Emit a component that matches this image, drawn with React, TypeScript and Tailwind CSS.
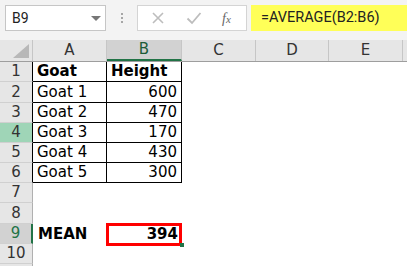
const cols = [
  { key: 'A', w: 'w-[74px]' },
  { key: 'B', w: 'w-[75px]' },
  { key: 'C', w: 'w-[74px]' },
  { key: 'D', w: 'w-[73px]' },
  { key: 'E', w: 'w-[74px]' },
];

const rows: { n: number; h: string; a: string; b: string; bold?: boolean }[] = [
  { n: 1, h: 'h-[20px]', a: 'Goat', b: 'Height', bold: true },
  { n: 2, h: 'h-[21px]', a: 'Goat 1', b: '600' },
  { n: 3, h: 'h-[20px]', a: 'Goat 2', b: '470' },
  { n: 4, h: 'h-[20px]', a: 'Goat 3', b: '170' },
  { n: 5, h: 'h-[20px]', a: 'Goat 4', b: '430' },
  { n: 6, h: 'h-[20px]', a: 'Goat 5', b: '300' },
  { n: 7, h: 'h-[20px]', a: '', b: '' },
  { n: 8, h: 'h-[21px]', a: '', b: '' },
  { n: 9, h: 'h-[20px]', a: 'MEAN', b: '394', bold: true },
  { n: 10, h: 'h-[20px]', a: '', b: '' },
];

const App = () => {
  return (
    <div className="w-[407px] h-[266px] overflow-hidden bg-white font-['DejaVu_Sans',sans-serif] text-black">
      {/* formula bar */}
      <div className="h-[40px] bg-[#f3f3f3] flex items-start pt-[5px]">
        <div className="ml-[5px] w-[101px] h-[26px] bg-white border border-[#c6c6c6] flex items-center pl-[6px] pr-[4px]">
          <span className="text-[14px] font-['Roboto',sans-serif] text-[#222] flex-1">B9</span>
          <span className="w-0 h-0 border-l-[5px] border-r-[5px] border-t-[5px] border-l-transparent border-r-transparent border-t-[#777]" />
        </div>
        <div className="w-[31px] h-[26px] flex flex-col items-center justify-center gap-[2px]">
          <span className="w-[2px] h-[2px] bg-[#a6a6a6]" />
          <span className="w-[2px] h-[2px] bg-[#a6a6a6]" />
          <span className="w-[2px] h-[2px] bg-[#a6a6a6]" />
        </div>
        <div className="w-[110px] h-[26px] bg-white border border-[#d4d4d4] flex items-center">
          <svg width="14" height="14" viewBox="0 0 14 14" className="ml-[13px]">
            <path d="M2 2 L12 12 M12 2 L2 12" stroke="#bdbdbd" strokeWidth="1.6" />
          </svg>
          <svg width="16" height="14" viewBox="0 0 16 14" className="ml-[21px]">
            <path d="M1.5 7.5 L6 12 L14.5 2" stroke="#bdbdbd" strokeWidth="1.8" fill="none" />
          </svg>
          <span className="ml-[20px] font-['Liberation_Serif',serif] italic text-[14px] text-[#666]">
            f<span className="text-[11px]">x</span>
          </span>
        </div>
        <div className="ml-[4px] flex-1 h-[26px] bg-[#ffff58] flex items-center pl-[10px]">
          <span className="text-[14.5px] font-['Roboto',sans-serif] text-[#222]">=AVERAGE(B2:B6)</span>
        </div>
      </div>

      {/* column headers */}
      <div className="h-[22px] flex bg-[#e6e6e6] border-b border-[#9e9e9e]">
        <div className="w-[33px] relative border-r border-[#c6c6c6]">
          <svg width="16" height="14" viewBox="0 0 16 14" className="absolute right-[3px] bottom-[3px]">
            <path d="M16 0 L16 14 L0 14 Z" fill="#b8b8b8" />
          </svg>
        </div>
        {cols.map((c) => (
          <div
            key={c.key}
            className={`${c.w} flex items-center justify-center text-[15px] border-r border-[#c6c6c6] ${
              c.key === 'B' ? 'bg-[#d2d2d2] text-[#1d5c38] border-b-2 border-b-[#217346]' : 'text-[#333]'
            }`}
          >
            {c.key}
          </div>
        ))}
        <div className="flex-1" />
      </div>

      {/* rows */}
      {rows.map((r) => {
        const inTable = r.n <= 6;
        return (
          <div key={r.n} className={`${r.h} flex`}>
            <div
              className={`w-[33px] flex items-center justify-center text-[15px] border-b border-[#d0d0d0] ${
                r.n === 4
                  ? 'bg-[#9fd5b7] text-[#333]'
                  : r.n === 9
                  ? 'bg-[#d2d2d2] text-[#217346] border-r-2 border-r-[#217346]'
                  : 'bg-[#e6e6e6] text-[#333]'
              } ${r.n !== 9 ? (inTable ? 'border-r border-r-black' : 'border-r border-r-[#b0b0b0]') : ''}`}
            >
              {r.n}
            </div>
            <div
              className={`w-[74px] flex items-center pl-[4px] text-[15px] whitespace-nowrap ${r.bold ? 'font-bold' : ''} ${
                inTable ? 'border-r border-b border-black' : ''
              } ${r.n === 9 ? 'pl-[5px]' : ''}`}
            >
              {r.a}
            </div>
            <div
              className={`w-[75px] flex items-center text-[15px] whitespace-nowrap relative ${r.bold ? 'font-bold' : ''} ${
                inTable ? 'border-r border-b border-black' : ''
              } ${r.n === 1 ? 'justify-start pl-[4px]' : 'justify-end pr-[4px]'}`}
            >
              {r.b}
              {r.n === 9 && (
                <>
                  <div className="absolute -left-[1px] -top-[1px] w-[76px] h-[23px] border-[3px] border-[#ff0000]" />
                  <div className="absolute right-[-2px] bottom-[-3px] w-[4px] h-[4px] bg-[#217346]" />
                </>
              )}
            </div>
            <div className="flex-1" />
          </div>
        );
      })}
      <div className="h-[20px] flex">
        <div className="w-[33px] bg-[#e6e6e6] border-r border-[#b0b0b0]" />
      </div>
    </div>
  );
};

export default App;
